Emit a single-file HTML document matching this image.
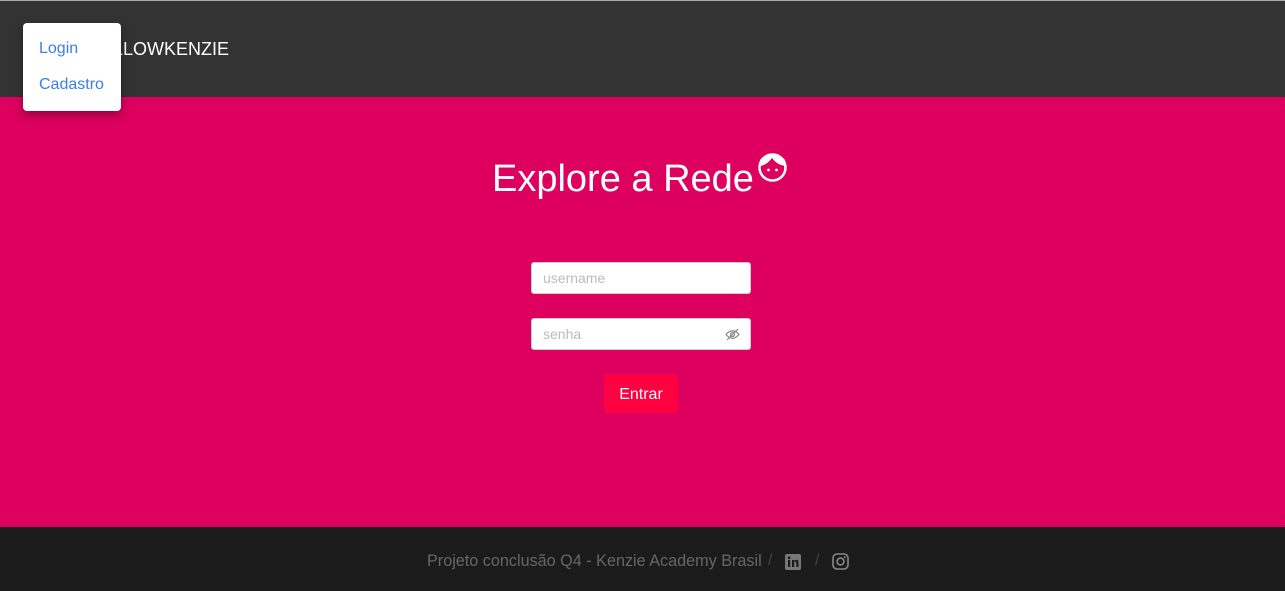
<!DOCTYPE html>
<html><head><meta charset="utf-8"><style>
*{box-sizing:border-box;margin:0;padding:0}
body{width:1285px;height:591px;overflow:hidden;font-family:"Liberation Sans",sans-serif;background:#1b1b1b;position:relative}
.top{position:absolute;left:0;top:0;width:1285px;height:1px;background:#aaa}
header{position:absolute;top:1px;left:0;width:1285px;height:96px;background:#333}
.brand{position:absolute;left:101px;top:38px;color:#fff;font-size:18px}
.menu{position:absolute;z-index:10;left:23px;top:23px;width:98px;height:88px;background:#fff;border-radius:4px;box-shadow:0 4px 10px rgba(0,0,0,.35)}
.menu div{position:absolute;left:16px;color:#3b7ded;font-size:16px}
main{position:absolute;top:97px;left:0;width:1285px;height:430px;background:#de005e}
h1{position:absolute;left:492px;top:61px;font-weight:normal;color:#fff;font-size:38px}
.inp{position:absolute;left:531px;width:220px;height:32px;background:#fff;border:1px solid #ccc;border-radius:3px;color:#bbb;font-size:14px;padding:7px 11px}
.btn{position:absolute;left:604px;top:277px;width:74px;height:39px;background:#ff0040;border-radius:3px;color:#fff;font-size:16px;text-align:center;line-height:42px}
footer{position:absolute;top:527px;left:0;width:1285px;height:64px;background:#1b1b1b;color:#666;font-size:16px}
</style></head><body>
<div class="top"></div>
<header><div class="brand">ALLOWKENZIE</div></header>
<div class="menu"><div style="top:17px">Login</div><div style="top:53px">Cadastro</div></div>
<main>
<h1>Explore a Rede</h1>
<svg style="position:absolute;left:757px;top:55px" width="31" height="31" viewBox="0 0 31 31"><circle cx="15.5" cy="15.5" r="13" fill="none" stroke="#fff" stroke-width="2.5"/><path d="M3 14 Q10 13 15 6 Q20 13 28 14 L28 8 Q22 2 15.5 2 Q8 2 3 8Z" fill="#fff"/><circle cx="11.5" cy="18" r="1.4" fill="#fff"/><circle cx="19.5" cy="18" r="1.4" fill="#fff"/></svg>
<div class="inp" style="top:165px">username</div>
<div class="inp" style="top:221px">senha
<svg style="position:absolute;right:10px;top:9px" width="15" height="13" viewBox="0 0 15 13"><path d="M1 6.5 Q7.5 -1 14 6.5 Q7.5 14 1 6.5Z" fill="none" stroke="#888" stroke-width="1.2"/><circle cx="7.5" cy="6.5" r="2" fill="none" stroke="#888" stroke-width="1.2"/><path d="M2 12 L13 1" stroke="#888" stroke-width="1.2"/></svg></div>
<div class="btn">Entrar</div>
</main>
<footer>
<div style="position:absolute;left:427px;top:25px;font-size:16.2px">Projeto conclusão Q4 - Kenzie Academy Brasil</div>
<span style="position:fixed;left:768px;top:552px;color:#444;font-size:16px">/</span>
<svg style="position:fixed;left:785px;top:554px" width="16" height="16" viewBox="0 0 16 16"><rect width="16" height="16" rx="2" fill="#777"/><rect x="3" y="6" width="2.2" height="7" fill="#1b1b1b"/><circle cx="4.1" cy="3.8" r="1.3" fill="#1b1b1b"/><path d="M7 6h2v1q1-1.3 2.5-1.3Q13.5 5.7 13.5 8.5V13h-2.2V9q0-1.5-1.2-1.5T9.2 9v4H7Z" fill="#1b1b1b"/></svg>
<span style="position:fixed;left:815px;top:552px;color:#444;font-size:16px">/</span>
<svg style="position:fixed;left:832px;top:553px" width="17" height="17" viewBox="0 0 17 17"><rect x="1" y="1" width="15" height="15" rx="4" fill="none" stroke="#888" stroke-width="1.6"/><circle cx="8.5" cy="8.5" r="3.4" fill="none" stroke="#888" stroke-width="1.6"/><circle cx="12.8" cy="4.2" r="1" fill="#888"/></svg>
</footer>
</body></html>
